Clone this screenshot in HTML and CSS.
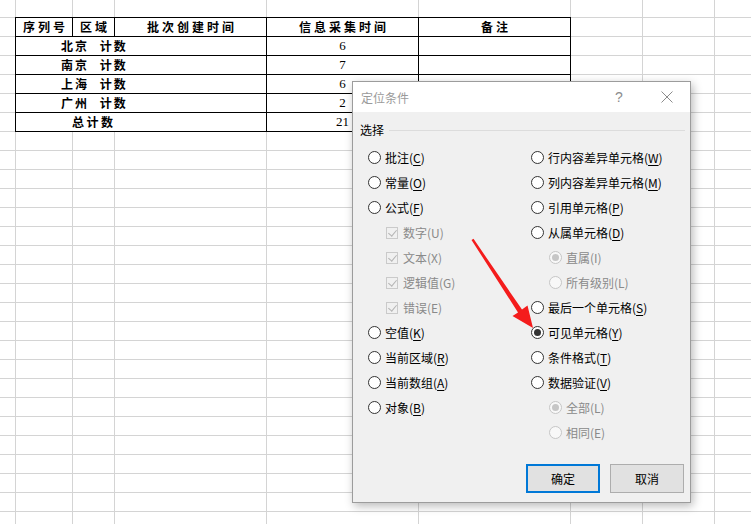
FILE: index.html
```html
<!DOCTYPE html>
<html lang="zh-CN">
<head>
    <meta charset="UTF-8">
    <title>定位条件</title>
    <link rel="stylesheet" href="styles.css">
</head>
<body>
    <!-- Worksheet -->
    <div class="sheet">
        <div class="data">
            <div class="cell head">序列号</div>
            <div class="cell head">区域</div>
            <div class="cell head">批次创建时间</div>
            <div class="cell head">信息采集时间</div>
            <div class="cell head">备注</div>

            <div class="cell group">北京 计数</div>
            <div class="cell num">6</div>
            <div class="cell"></div>

            <div class="cell group">南京 计数</div>
            <div class="cell num">7</div>
            <div class="cell"></div>

            <div class="cell group">上海 计数</div>
            <div class="cell num">6</div>
            <div class="cell"></div>

            <div class="cell group">广州 计数</div>
            <div class="cell num">2</div>
            <div class="cell"></div>

            <div class="cell group total">总计数</div>
            <div class="cell num">21</div>
            <div class="cell"></div>
        </div>
    </div>

    <!-- Go To Special dialog -->
    <div class="dialog">
        <div class="dialog-title">
            <span class="title-text">定位条件</span>
            <span class="title-btn help">?</span>
            <span class="title-btn close">
                <svg width="12" height="12" viewBox="0 0 12 12" fill="none" stroke="#8c8c8c" stroke-width="1">
                    <line x1="0.5" y1="0.5" x2="11.5" y2="11.5"></line>
                    <line x1="11.5" y1="0.5" x2="0.5" y2="11.5"></line>
                </svg>
            </span>
        </div>
        <div class="dialog-body">
            <div class="group-head">
                <span>选择</span>
                <span class="group-line"></span>
            </div>
            <div class="options">
                <div class="col">
                    <div class="opt"><span class="radio"></span><span>批注(<u>C</u>)</span></div>
                    <div class="opt"><span class="radio"></span><span>常量(<u>O</u>)</span></div>
                    <div class="opt"><span class="radio"></span><span>公式(<u>F</u>)</span></div>
                    <div class="opt sub off"><span class="check"></span><span>数字(U)</span></div>
                    <div class="opt sub off"><span class="check"></span><span>文本(X)</span></div>
                    <div class="opt sub off"><span class="check"></span><span>逻辑值(G)</span></div>
                    <div class="opt sub off"><span class="check"></span><span>错误(E)</span></div>
                    <div class="opt"><span class="radio"></span><span>空值(<u>K</u>)</span></div>
                    <div class="opt"><span class="radio"></span><span>当前区域(<u>R</u>)</span></div>
                    <div class="opt"><span class="radio"></span><span>当前数组(<u>A</u>)</span></div>
                    <div class="opt"><span class="radio"></span><span>对象(<u>B</u>)</span></div>
                </div>
                <div class="col">
                    <div class="opt"><span class="radio"></span><span>行内容差异单元格(<u>W</u>)</span></div>
                    <div class="opt"><span class="radio"></span><span>列内容差异单元格(<u>M</u>)</span></div>
                    <div class="opt"><span class="radio"></span><span>引用单元格(<u>P</u>)</span></div>
                    <div class="opt"><span class="radio"></span><span>从属单元格(<u>D</u>)</span></div>
                    <div class="opt sub off"><span class="radio on"></span><span>直属(I)</span></div>
                    <div class="opt sub off"><span class="radio"></span><span>所有级别(L)</span></div>
                    <div class="opt"><span class="radio"></span><span>最后一个单元格(<u>S</u>)</span></div>
                    <div class="opt"><span class="radio on"></span><span>可见单元格(<u>Y</u>)</span></div>
                    <div class="opt"><span class="radio"></span><span>条件格式(<u>T</u>)</span></div>
                    <div class="opt"><span class="radio"></span><span>数据验证(<u>V</u>)</span></div>
                    <div class="opt sub off"><span class="radio on"></span><span>全部(L)</span></div>
                    <div class="opt sub off"><span class="radio"></span><span>相同(E)</span></div>
                </div>
            </div>
            <div class="dialog-footer">
                <button class="btn primary">确定</button>
                <button class="btn">取消</button>
            </div>
        </div>
    </div>

    <!-- Red pointer arrow -->
    <svg class="arrow" width="751" height="524" viewBox="0 0 751 524">
        <polygon fill="#f41c1c" points="471.5,240 473.5,238.8 522,309.6 527.5,305.5 533,328 512.5,316 518,312.4"></polygon>
    </svg>
</body>
</html>
```

FILE: styles.css
```css
body {
    margin: 0;
    background: #fff;
    font-family: "Noto Sans CJK SC", "Noto Sans", sans-serif;
    font-size: 12px;
    color: #000;
    overflow: hidden;
}

/* Worksheet grid */
.sheet {
    height: 524px;
    padding-top: 17px;
    box-sizing: border-box;
    background-color: #fff;
    background-image:
        linear-gradient(#d4d4d4, #d4d4d4),
        linear-gradient(#d4d4d4, #d4d4d4),
        linear-gradient(#d4d4d4, #d4d4d4),
        linear-gradient(#d4d4d4, #d4d4d4),
        linear-gradient(#d4d4d4, #d4d4d4),
        linear-gradient(#d4d4d4, #d4d4d4),
        linear-gradient(#d4d4d4, #d4d4d4),
        linear-gradient(#d4d4d4, #d4d4d4),
        repeating-linear-gradient(to bottom, transparent 0 18px, #d4d4d4 18px 19px);
    background-size: 1px 100%, 1px 100%, 1px 100%, 1px 100%, 1px 100%, 1px 100%, 1px 100%, 1px 100%, 100% 100%;
    background-position: 15px 0, 72px 0, 114px 0, 266px 0, 418px 0, 570px 0, 642px 0, 714px 0, 0 -1px;
    background-repeat: no-repeat, no-repeat, no-repeat, no-repeat, no-repeat, no-repeat, no-repeat, no-repeat, repeat;
}

.data {
    display: grid;
    grid-template-columns: 57px 42px 152px 152px 152px;
    grid-auto-rows: 19px;
    width: max-content;
    margin-left: 15px;
    border-top: 1px solid #000;
    border-left: 1px solid #000;
}

.cell {
    background: #fff;
    border-right: 1px solid #000;
    border-bottom: 1px solid #000;
    line-height: 18px;
    text-align: center;
    white-space: nowrap;
}

.head {
    font-weight: 700;
    letter-spacing: 3px;
    padding-left: 3px;
}

.group {
    grid-column: span 3;
    text-align: left;
    padding-left: 45px;
    font-weight: 700;
    letter-spacing: 2px;
    word-spacing: 6px;
}

.group.total {
    padding-left: 56px;
    letter-spacing: 2.5px;
}

.num {
    font-family: "Liberation Serif", serif;
    font-size: 13px;
}

/* Dialog */
.dialog {
    position: absolute;
    left: 352px;
    top: 81px;
    width: 339px;
    height: 422px;
    box-sizing: border-box;
    border: 1px solid #9c9c9c;
    box-shadow: 2px 3px 9px rgba(0, 0, 0, 0.28);
    display: flex;
    flex-direction: column;
    background: #f0f0f0;
}

.dialog-title {
    height: 30px;
    background: #fff;
    display: flex;
    align-items: center;
}

.title-text {
    flex: 1;
    padding-left: 8px;
    color: #9a9a9a;
}

.title-btn {
    width: 46px;
    height: 30px;
    display: flex;
    justify-content: center;
    align-items: center;
    color: #8c8c8c;
}

.help {
    font-family: "Liberation Sans", sans-serif;
    font-size: 14px;
    margin-right: 2px;
}

.dialog-body {
    flex: 1;
    display: flex;
    flex-direction: column;
    padding-top: 10px;
}

.group-head {
    display: flex;
    align-items: center;
    gap: 5px;
    height: 16px;
    line-height: 16px;
    padding: 0 5px 0 7px;
}

.group-line {
    flex: 1;
    height: 1px;
    background: #dcdcdc;
}

.options {
    display: grid;
    grid-template-columns: 163px 1fr;
    margin-top: 7px;
    padding-left: 15px;
}

.opt {
    height: 25px;
    display: flex;
    align-items: center;
    gap: 4px;
    white-space: nowrap;
}

.opt u {
    text-decoration-thickness: 1px;
    text-underline-offset: 2px;
}

.opt.sub {
    padding-left: 18px;
}

.opt.off {
    color: #8a8a8a;
}

.radio {
    width: 13px;
    height: 13px;
    box-sizing: border-box;
    border: 1px solid #333;
    border-radius: 50%;
    background: #fff;
    display: flex;
    justify-content: center;
    align-items: center;
    flex-shrink: 0;
}

.radio.on::after {
    content: "";
    width: 7px;
    height: 7px;
    border-radius: 50%;
    background: #333;
}

.off .radio {
    border-color: #c6c6c6;
    background: #f8f8f8;
}

.off .radio.on::after {
    background: #c6c6c6;
}

.check {
    width: 12px;
    height: 12px;
    box-sizing: border-box;
    border: 1px solid #cacaca;
    margin-right: 1px;
    position: relative;
    flex-shrink: 0;
}

.check::after {
    content: "";
    position: absolute;
    left: 3px;
    top: 0;
    width: 4px;
    height: 7px;
    border-right: 1px solid #b4b4b4;
    border-bottom: 1px solid #b4b4b4;
    transform: rotate(40deg);
}

.dialog-footer {
    margin-top: auto;
    display: flex;
    justify-content: flex-end;
    gap: 10px;
    padding: 0 6px 9px 0;
}

.btn {
    width: 74px;
    height: 29px;
    box-sizing: border-box;
    background: #e1e1e1;
    border: 1px solid #adadad;
    font-family: inherit;
    font-size: 12px;
    color: #000;
    padding: 0;
}

.btn.primary {
    border: 2px solid #0078d7;
}

.arrow {
    position: absolute;
    left: 0;
    top: 0;
    pointer-events: none;
}
```
